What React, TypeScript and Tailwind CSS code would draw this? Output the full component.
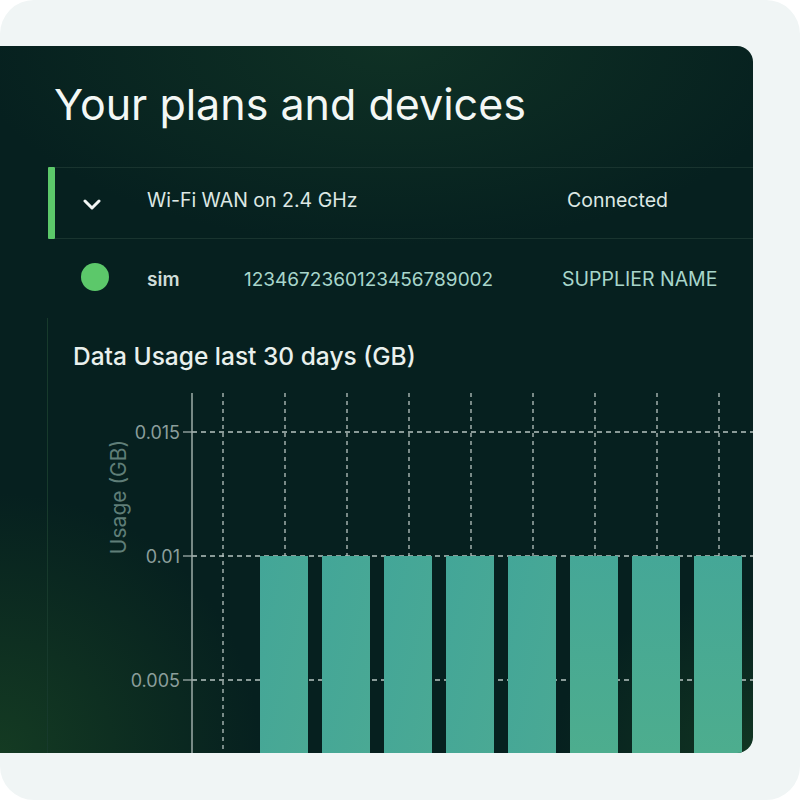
import React from "react";

const GREEN = "#5cc86a";

function Chevron() {
  return (
    <svg width="18" height="11" viewBox="0 0 18 11" fill="none">
      <polyline
        points="2,2 9,9 16,2"
        stroke="#f2f6f4"
        strokeWidth="3"
        strokeLinecap="round"
        strokeLinejoin="round"
      />
    </svg>
  );
}

// bar chart of daily usage; values in GB
const values = [0, 0.01, 0.01, 0.01, 0.01, 0.01, 0.01, 0.01, 0.01, 0.01, 0.01];

function UsageChart() {
  const W = 705;
  const H = 363;
  const axisX = 144;
  const top = 3;
  // y pixel for a GB value: 0.005 GB == 124 px
  const yFor = (v: number) => 414 - (v / 0.005) * 124;
  const ticks = [0.015, 0.01, 0.005];
  const band = 62;
  const firstCenter = 175;
  const cats = Array.from({ length: 10 }, (_, i) => firstCenter + band * i);
  return (
    <svg width={W} height={H} viewBox={`0 0 ${W} ${H}`} className="block">
      <defs>
        <linearGradient id="barFill" x1="0" y1="0" x2="1" y2="1" gradientUnits="objectBoundingBox">
          <stop offset="0" stopColor="#43a698" />
          <stop offset="1" stopColor="#4aa994" />
        </linearGradient>
        <linearGradient id="barFillLate" x1="0" y1="0" x2="0" y2="1">
          <stop offset="0" stopColor="#45a797" />
          <stop offset="1" stopColor="#4dad8e" />
        </linearGradient>
      </defs>

      {/* horizontal grid */}
      {ticks.map((t) => (
        <line
          key={`h${t}`}
          x1={axisX}
          x2={W}
          y1={yFor(t)}
          y2={yFor(t)}
          stroke="#b7c4c1"
          strokeWidth="1.3"
          strokeDasharray="5 4"
        />
      ))}
      {/* vertical grid */}
      {cats.map((x) => (
        <line
          key={`v${x}`}
          x1={x}
          x2={x}
          y1={top}
          y2={H}
          stroke="#b7c4c1"
          strokeWidth="1.3"
          strokeDasharray="4 4"
        />
      ))}

      {/* bars */}
      {values.map((v, i) =>
        v > 0 ? (
          <rect
            key={`b${i}`}
            x={firstCenter + band * i - 25}
            y={yFor(v)}
            width={48}
            height={H - yFor(v)}
            fill={i >= 6 ? "url(#barFillLate)" : "url(#barFill)"}
          />
        ) : null
      )}

      {/* y axis */}
      <line x1={axisX} x2={axisX} y1={top} y2={H} stroke="#9eaca9" strokeWidth="1.5" />
      {ticks.map((t) => (
        <g key={`t${t}`}>
          <line x1={axisX - 9} x2={axisX} y1={yFor(t)} y2={yFor(t)} stroke="#9eaca9" strokeWidth="1.3" />
          <text
            x={axisX - 12}
            y={yFor(t)}
            textAnchor="end"
            dominantBaseline="central"
            fill="#8b9e9b"
            fontSize="18"
            fontFamily="Inter, 'Noto Sans', sans-serif"
          >
            {String(t)}
          </text>
        </g>
      ))}
      <text
        x={0}
        y={0}
        transform={`translate(70 107) rotate(-90)`}
        textAnchor="middle"
        dominantBaseline="central"
        fill="#5f7e78"
        fontSize="21"
        fontFamily="Inter, 'Noto Sans', sans-serif"
      >
        Usage (GB)
      </text>
    </svg>
  );
}

export default function App() {
  return (
    <div className="w-[800px] h-[800px] bg-white" style={{ fontFamily: "Inter, 'Noto Sans', sans-serif" }}>
      <div className="w-[800px] h-[800px] rounded-[34px] bg-[#f0f5f5] overflow-hidden pt-[46px]">
        <div
          className="relative w-[753px] h-[707px] rounded-r-[16px] overflow-hidden flex flex-col"
          style={{
            background:
              "radial-gradient(ellipse 420px 200px at 52% 0%, rgba(24,66,42,0.5), rgba(24,66,42,0) 100%), radial-gradient(ellipse 260px 260px at 0% 100%, rgba(26,70,36,0.7), rgba(26,70,36,0) 100%), radial-gradient(ellipse 200px 160px at 100% 100%, rgba(26,70,36,0.55), rgba(26,70,36,0) 100%), #06201f",
          }}
        >
          <h1 className="pl-[54px] pt-[33px] text-[43px] leading-[50px] font-normal text-[#f3f7f5]">
            Your plans and devices
          </h1>

          {/* connection row */}
          <div className="mt-[38px] ml-[48px] flex h-[72px]">
            <div className="w-[7px] rounded-[1px]" style={{ background: GREEN }} />
            <div className="flex-1 flex items-center border-y border-[#19342f] text-[19.5px] text-[#dde8e4]">
              <div className="pl-[28px] pt-[3px] w-[92px] flex">
                <Chevron />
              </div>
              <span className="w-[420px] mt-[-4px]">Wi-Fi WAN on 2.4 GHz</span>
              <span className="mt-[-4px]">Connected</span>
            </div>
          </div>

          {/* sim row */}
          <div className="flex items-center h-[79px] pl-[81px] text-[19px]">
            <div className="w-[28px] h-[28px] rounded-full mt-[-3px]" style={{ background: GREEN }} />
            <span className="ml-[38px] w-[97px] font-semibold text-[#cfdcd8] mt-[3px]">sim</span>
            <span className="w-[318px] text-[#a8d6cb] mt-[3px]">1234672360123456789002</span>
            <span className="text-[#a8d6cb] text-[19.5px] mt-[3px]">SUPPLIER NAME</span>
          </div>

          {/* usage chart */}
          <div className="flex-1 ml-[47px] border-l border-[#173a2c] flex flex-col">
            <h2 className="pl-[25px] pt-[23px] text-[24.5px] leading-[30px] font-medium text-[#e9f0ed]">
              Data Usage last 30 days (GB)
            </h2>
            <div className="mt-[19px]">
              <UsageChart />
            </div>
          </div>
        </div>
      </div>
    </div>
  );
}
